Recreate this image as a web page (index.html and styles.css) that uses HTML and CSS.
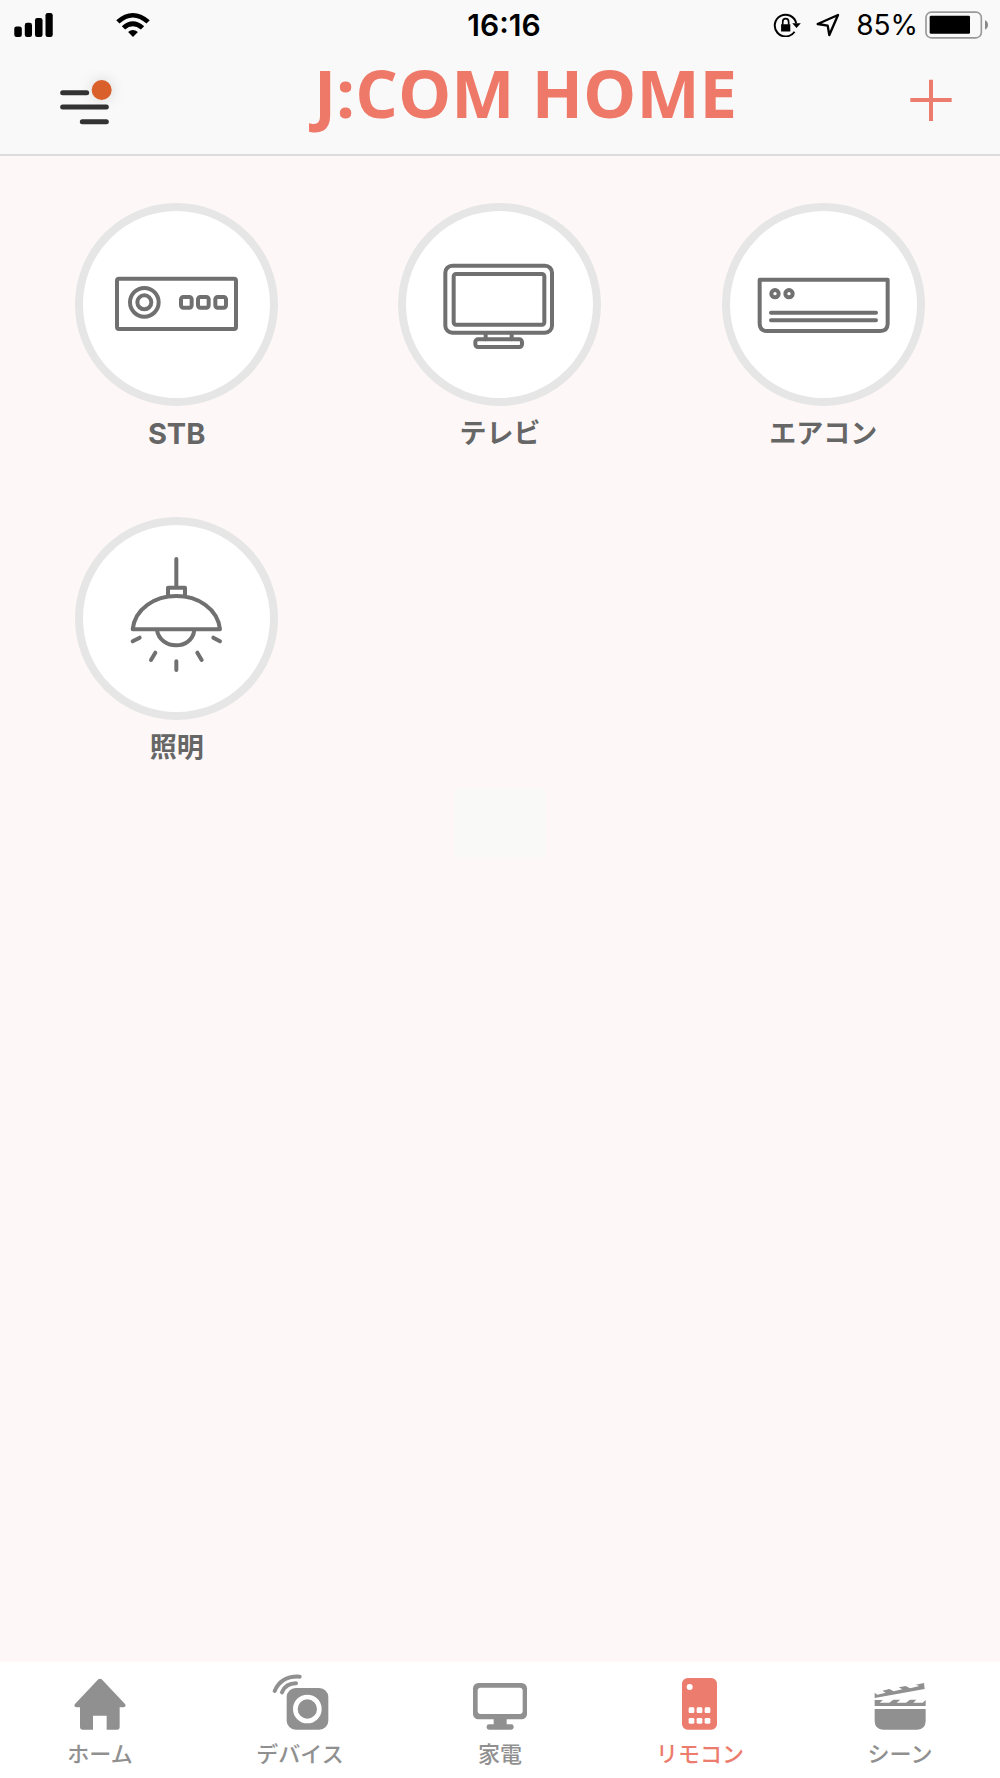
FILE: index.html
```html
<!DOCTYPE html>
<html lang="ja">
<head>
<meta charset="utf-8">
<meta name="viewport" content="width=device-width, initial-scale=1">
<title>J:COM HOME</title>
<link rel="stylesheet" href="styles.css">
</head>
<body>
<div class="app">
  <header class="header">
    <div class="status">
      <div class="status-side">
        <svg class="signal" viewBox="43 36 117 73" aria-hidden="true"><rect x="43" y="77" width="23" height="32" rx="7"/><rect x="75" y="66" width="22" height="43" rx="7"/><rect x="106" y="51" width="23" height="58" rx="7"/><rect x="138" y="36" width="22" height="73" rx="7"/></svg>
        <svg class="wifi" viewBox="348 36 102 73" aria-hidden="true"><path d="M348 58Q398 14 450 58L440 68Q398 31 358 68ZM365 76Q398 46 433 76L423 86Q398 66 375 86ZM384 94Q398 81 414 94L399 109Z"/></svg>
      </div>
      <time class="clock">16:16</time>
      <div class="status-side status-right">
        <svg class="lock" viewBox="72 36 84 73" aria-hidden="true"><path d="M137 93A33 33 0 1 1 142 67" fill="none" stroke="#000" stroke-width="6"/><path d="M130 67H156L143 82ZM96 70H124V92H96Z"/><path d="M101 72V63A9 10 0 0 1 119 63V72" fill="none" stroke="#000" stroke-width="5"/></svg>
        <svg class="location" viewBox="201 38 72 72" aria-hidden="true"><path d="M267 44L206 71L236 76L241 104Z" fill="none" stroke="#000" stroke-width="7" stroke-linejoin="round"/></svg>
        <span class="percent">85%</span>
        <svg class="battery" viewBox="525 31 189 83" aria-hidden="true"><rect x="528" y="34" width="166" height="77" rx="16" fill="none" stroke="#999" stroke-width="5"/><rect x="539" y="45" width="121" height="54" rx="4"/><path d="M705 58Q714 62 714 72T705 87Z" fill="#888"/></svg>
      </div>
    </div>
    <div class="titlebar">
      <button class="icon-button menu" type="button" aria-label="メニュー">
        <svg viewBox="156 210 216 180" aria-hidden="true"><path d="M188 278H260M188 321H319M247 365H319" stroke="#333" stroke-width="15" stroke-linecap="round"/><circle class="badge" cx="305" cy="270" r="30"/></svg>
      </button>
      <h1 class="title">J:COM HOME</h1>
      <button class="icon-button add" type="button" aria-label="追加">
        <svg viewBox="453 210 180 180" aria-hidden="true"><path d="M481 300H605M543 239V363" stroke="#ec7d6e" stroke-width="12"/></svg>
      </button>
    </div>
  </header>

  <main class="devices">
    <button class="device" type="button">
      <svg class="device-icon" viewBox="69 63 561 561" aria-hidden="true"><rect x="171" y="266" width="357" height="151" rx="6"/><circle cx="253" cy="337" r="43"/><circle cx="253" cy="337" r="21"/><rect x="363" y="321" width="32" height="32" rx="7"/><rect x="414" y="321" width="32" height="32" rx="7"/><rect x="466" y="321" width="32" height="32" rx="7"/></svg>
      <span lang="en">STB</span>
    </button>
    <button class="device" type="button">
      <svg class="device-icon" viewBox="80 63 561 561" aria-hidden="true"><rect x="198" y="227" width="320" height="201" rx="21"/><rect x="223" y="252" width="272" height="152" rx="7"/><path d="M319 430V448M397 430V448"/><rect x="288" y="448" width="140" height="23" rx="8"/></svg>
      <span>テレビ</span>
    </button>
    <button class="device" type="button">
      <svg class="device-icon" viewBox="90 63 561 561" aria-hidden="true"><path d="M179 269H563V402Q562 423 541 423H201Q180 423 179 402ZM213 368H528M213 391H528"/><circle cx="225" cy="311" r="11"/><circle cx="267" cy="311" r="11"/></svg>
      <span>エアコン</span>
    </button>
    <button class="device" type="button">
      <svg class="device-icon" viewBox="69 60 561 561" aria-hidden="true"><path d="M349 162V246M324 270V248H375V270M218 373C225 310 285 273 349 273S473 310 480 373ZM291 376C301 433 393 439 403 376M218 409L239 398M273 465L286 443M349 469V495M425 465L412 443M480 409L460 398"/></svg>
      <span>照明</span>
    </button>
    <div class="loader" aria-hidden="true"></div>
  </main>

  <nav class="tabs">
    <a class="tab" href="#home">
      <svg class="tab-icon" viewBox="210 96 180 180" aria-hidden="true"><path d="M295 118Q300 114 305 118L375 192Q380 200 371 202H359V262Q359 269 352 269H320V227H279V269H247Q240 269 240 262V202H229Q220 200 225 192Z"/></svg>
      <span>ホーム</span>
    </a>
    <a class="tab" href="#devices">
      <svg class="tab-icon" viewBox="810 96 180 180" aria-hidden="true"><rect x="860" y="144" width="125" height="125" rx="27"/><circle cx="922" cy="207" r="36" fill="none" stroke="#fff" stroke-width="14"/><path d="M824 153Q844 107 899 110M846 157Q857 130 888 130" fill="none" stroke="currentColor" stroke-width="12" stroke-linecap="round"/></svg>
      <span>デバイス</span>
    </a>
    <a class="tab" href="#appliances">
      <svg class="tab-icon" viewBox="210 96 180 180" aria-hidden="true"><rect x="219" y="129" width="162" height="109" rx="16"/><rect x="233" y="143" width="135" height="79" rx="9" fill="#fff"/><path d="M281 236H320V260H281Z"/><rect x="260" y="253" width="81" height="16" rx="7"/></svg>
      <span>家電</span>
    </a>
    <a class="tab tab-active" href="#remote" aria-current="page">
      <svg class="tab-icon" viewBox="810 96 180 180" aria-hidden="true"><rect x="846" y="114" width="105" height="155" rx="17"/><g fill="#fff"><circle cx="869" cy="141" r="9"/><rect x="866" y="202" width="17" height="17" rx="4"/><rect x="890" y="202" width="17" height="17" rx="4"/><rect x="914" y="202" width="17" height="17" rx="4"/><rect x="866" y="234" width="17" height="17" rx="4"/><rect x="890" y="234" width="17" height="17" rx="4"/><rect x="914" y="234" width="17" height="17" rx="4"/></g></svg>
      <span>リモコン</span>
    </a>
    <a class="tab" href="#scenes">
      <svg class="tab-icon" viewBox="360 96 180 180" aria-hidden="true"><path d="M374 207H527V244Q526 269 502 269H399Q375 269 374 244ZM374 198V180H399L389 188H418L430 179H451L440 188H468L480 179H499L490 188H518L527 180V198ZM374 174V158L382 164L407 158L397 152L418 147L431 154L457 148L446 142L467 138L480 145L508 138L497 134L522 129L524 147Z"/></svg>
      <span>シーン</span>
    </a>
  </nav>
</div>
</body>
</html>
```

FILE: styles.css
```css
* {
  box-sizing: border-box;
}

body {
  margin: 0;
  background: #fdf8f7;
  color: #666;
  font-family: Inter, "Noto Sans CJK JP", sans-serif;
}

button {
  padding: 0;
  border: 0;
  background: none;
  color: inherit;
  font: inherit;
  cursor: pointer;
}

svg {
  display: block;
  flex: none;
}

.app {
  display: flex;
  flex-direction: column;
  min-height: 100vh;
}

.header {
  border-bottom: 2px solid #dcdcdc;
  background: #f9f9f9;
}

.status {
  display: grid;
  grid-template-columns: 1fr auto 1fr;
  align-items: center;
  height: 50px;
  padding: 0 12px 0 14px;
  color: #000;
}

.status-side {
  display: flex;
  align-items: center;
}

.status-right {
  justify-content: flex-end;
}

.signal {
  width: 39px;
  height: 24px;
}

.wifi {
  width: 34px;
  height: 24px;
  margin-left: 63px;
}

.clock {
  margin-left: 6px;
  font-size: 30px;
  font-weight: 600;
}

.lock {
  width: 28px;
  height: 24px;
}

.location {
  width: 24px;
  height: 24px;
  margin: 0 16px 0 15px;
}

.percent {
  margin-right: 7px;
  font-size: 28px;
}

.battery {
  width: 63px;
  height: 28px;
}

.titlebar {
  display: grid;
  grid-template-columns: 1fr auto 1fr;
  align-items: center;
  height: 104px;
  padding: 0 39px 4px 52px;
}

.menu {
  justify-self: start;
}

.menu svg {
  width: 72px;
  height: 60px;
}

.badge {
  fill: #d9602a;
  filter: drop-shadow(0 0 20px rgba(0, 0, 0, 0.15));
}

.add {
  justify-self: end;
}

.add svg {
  width: 60px;
  height: 60px;
}

.title {
  align-self: start;
  margin: 0 0 0 38px;
  color: #ee7968;
  font-family: "Open Sans", sans-serif;
  font-size: 67px;
  font-weight: 700;
  line-height: 84px;
}

.devices {
  position: relative;
  display: grid;
  flex: 1;
  grid-template-columns: repeat(3, 1fr);
  align-content: start;
  justify-items: center;
  row-gap: 63px;
  padding: 47px 15px;
}

.device {
  display: flex;
  flex-direction: column;
  align-items: center;
  gap: 8px;
  font-size: 27px;
  font-weight: 700;
  line-height: 40px;
}

.device :lang(en) {
  font-size: 29px;
}

.device-icon {
  width: 203px;
  height: 203px;
  border: 8px solid #e6e6e6;
  border-radius: 50%;
  background: #fff;
  fill: none;
  stroke: #707070;
  stroke-width: 12;
  stroke-linecap: round;
  stroke-linejoin: round;
}

/* Faded-out loading panel that floats over the grid */
.loader {
  position: absolute;
  top: 42%;
  left: 50%;
  width: 90px;
  height: 68px;
  background: #f9faf7;
  transform: translateX(-50%);
  pointer-events: none;
}

.tabs {
  display: grid;
  grid-template-columns: repeat(5, 1fr);
  height: 116px;
  padding-top: 10px;
  background: #fff;
}

.tab {
  display: flex;
  flex-direction: column;
  align-items: center;
  gap: 6px;
  color: #909090;
  font-size: 22px;
  font-weight: 500;
  line-height: 32px;
  text-decoration: none;
}

.tab-active {
  color: #ec7d6e;
}

.tab-icon {
  width: 60px;
  height: 60px;
  fill: currentColor;
}
```
